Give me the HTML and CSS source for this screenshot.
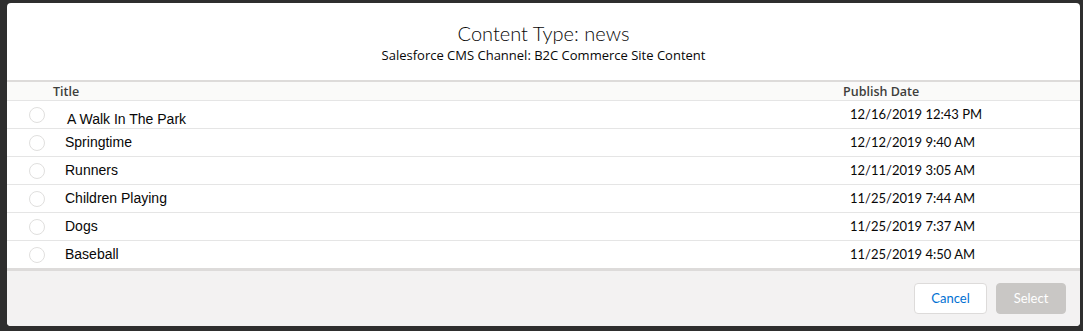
FILE: index.html
```html
<!DOCTYPE html>
<html lang="en">
<head>
    <meta charset="UTF-8">
    <meta name="viewport" content="width=device-width, initial-scale=1.0">
    <title>Content Type: news</title>
    <link rel="stylesheet" href="styles.css">
</head>
<body>

    <!-- Content picker modal -->
    <div class="modal">
        <header class="modal-header">
            <h2 class="modal-title">Content Type: news</h2>
            <p class="modal-subtitle">Salesforce CMS Channel: B2C Commerce Site Content</p>
        </header>

        <div class="content-table">
            <div class="table-row table-head">
                <span></span>
                <span class="head-title">Title</span>
                <span class="head-date">Publish Date</span>
            </div>
            <div class="table-row">
                <span class="radio"></span>
                <span class="cell-title first">A Walk In The Park</span>
                <span class="cell-date">12/16/2019 12:43 PM</span>
            </div>
            <div class="table-row">
                <span class="radio"></span>
                <span class="cell-title">Springtime</span>
                <span class="cell-date">12/12/2019 9:40 AM</span>
            </div>
            <div class="table-row">
                <span class="radio"></span>
                <span class="cell-title">Runners</span>
                <span class="cell-date">12/11/2019 3:05 AM</span>
            </div>
            <div class="table-row">
                <span class="radio"></span>
                <span class="cell-title">Children Playing</span>
                <span class="cell-date">11/25/2019 7:44 AM</span>
            </div>
            <div class="table-row">
                <span class="radio"></span>
                <span class="cell-title">Dogs</span>
                <span class="cell-date">11/25/2019 7:37 AM</span>
            </div>
            <div class="table-row">
                <span class="radio"></span>
                <span class="cell-title">Baseball</span>
                <span class="cell-date">11/25/2019 4:50 AM</span>
            </div>
        </div>

        <footer class="modal-footer">
            <button class="btn btn-neutral">Cancel</button>
            <button class="btn btn-brand" disabled>Select</button>
        </footer>
    </div>

</body>
</html>
```

FILE: styles.css
```css
body {
    margin: 0;
    height: 331px;
    box-sizing: border-box;
    padding: 3px 3px 5px 7px;
    background-color: #2e2e2e; /* overlay */
    font-family: Lato, "Open Sans", sans-serif;
    color: #080707;
    overflow: hidden;
}

.modal {
    height: 323px;
    display: flex;
    flex-direction: column;
    background-color: white;
    border-radius: 4px;
    overflow: hidden;
}

.modal-header {
    height: 79px;
    box-sizing: border-box;
    padding-top: 17px;
    text-align: center;
    border-bottom: 2px solid #dddbda;
}

.modal-title {
    margin: 0;
    font-size: 20px;
    font-weight: 300;
    line-height: 26px;
}

.modal-subtitle {
    margin: 1px 0 0;
    font-family: "Open Sans", sans-serif;
    font-size: 13px;
    line-height: 17px;
}

.table-row {
    display: grid;
    grid-template-columns: 46px 1fr 237px;
    height: 27px;
    border-bottom: 1px solid #e5e5e5;
}

.table-head {
    height: 18px;
    align-items: center;
    background-color: #fafaf9;
    font-family: "Open Sans", sans-serif;
    font-size: 12.5px;
    font-weight: 600;
    color: #3e3e3c;
}

.radio {
    width: 16px;
    height: 16px;
    margin: 6px 0 0 22px;
    box-sizing: border-box;
    border: 1px solid #e0dfde;
    border-radius: 50%;
    background-color: white;
}

.cell-title {
    padding: 4px 0 0 12px;
    font-family: "Liberation Sans", Arial, sans-serif;
    font-size: 14px;
    line-height: 18px;
}

.cell-title.first {
    padding: 9px 0 0 14px;
}

.cell-date {
    padding-left: 7px;
    font-size: 13px;
    line-height: 27px;
}

.modal-footer {
    flex: 1;
    display: flex;
    justify-content: flex-end;
    align-items: center;
    gap: 9px;
    padding-right: 14px;
    background-color: #f3f2f2;
    border-top: 3px solid #dddbda;
    margin-top: -1px;
}

.btn {
    height: 31px;
    padding: 0 16px;
    border-radius: 4px;
    font-family: Lato, "Open Sans", sans-serif;
    font-size: 13px;
    line-height: 29px;
}

.btn-neutral {
    width: 73px;
    background-color: white;
    border: 1px solid #dddbda;
    color: #0070d2;
}

.btn-brand {
    width: 70px;
    background-color: #c9c7c5;
    border: 1px solid #c9c7c5;
    color: white;
}
```
